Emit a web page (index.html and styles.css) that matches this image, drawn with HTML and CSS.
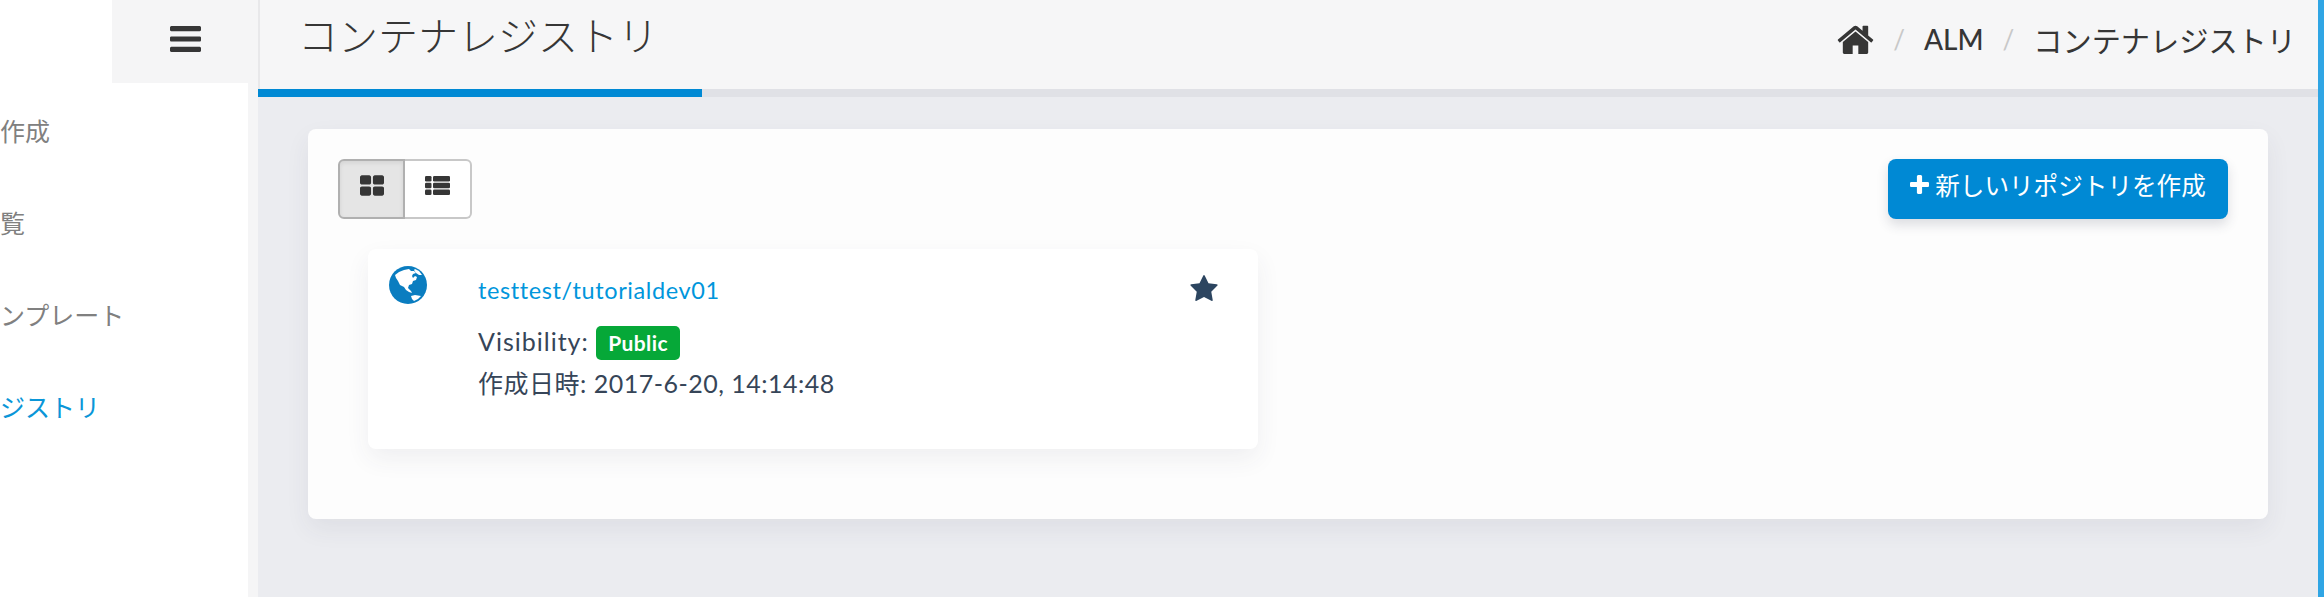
FILE: index.html
```html
<!DOCTYPE html>
<html lang="ja">
<head>
<meta charset="utf-8">
<title>コンテナレジストリ</title>
<link rel="stylesheet" href="styles.css">
</head>
<body>
<div class="app">
  <aside class="sidebar">
    <div class="brand-row">
      <div class="brand"></div>
      <div class="toggle">
        <svg class="icon-bars" viewBox="128 256 1536 1280"><path d="M1664 1344v128q0 26-19 45t-45 19H192q-26 0-45-19t-19-45v-128q0-26 19-45t45-19h1408q26 0 45 19t19 45zm0-512v128q0 26-19 45t-45 19H192q-26 0-45-19t-19-45V832q0-26 19-45t45-19h1408q26 0 45 19t19 45zm0-512v128q0 26-19 45t-45 19H192q-26 0-45-19t-19-45V320q0-26 19-45t45-19h1408q26 0 45 19t19 45z"/></svg>
      </div>
    </div>
    <div class="side-body">
      <nav class="menu">
        <a class="menu-item">作成</a>
        <a class="menu-item">覧</a>
        <a class="menu-item">ンプレート</a>
        <a class="menu-item active">ジストリ</a>
      </nav>
    </div>
  </aside>
  <main class="main">
    <header class="topbar">
      <h1 class="title">コンテナレジストリ</h1>
      <ol class="crumbs">
        <li class="crumb">
          <svg class="icon-home" viewBox="92 128 1608 1408"><path d="M1472 992v480q0 26-19 45t-45 19h-384v-384H768v384H384q-26 0-45-19t-19-45V992q0-1 .5-3t.5-3l575-474 575 474q1 2 1 6zm223-69l-62 74q-8 9-21 11h-3q-13 0-21-7L896 424l-692 577q-12 8-24 7-13-2-21-11l-62-74q-8-10-7-23.500t11-21.500l719-599q32-26 76-26t76 26l244 204V288q0-14 9-23t23-9h192q14 0 23 9t9 23v408l219 182q10 8 11 21.500t-7 23.500z"/></svg>
        </li>
        <li class="sep">/</li>
        <li class="crumb alm">ALM</li>
        <li class="sep">/</li>
        <li class="crumb">コンテナレジストリ</li>
      </ol>
    </header>
    <div class="progress"><div class="progress-fill"></div></div>
    <section class="panel">
      <div class="toolbar">
        <div class="btn-group">
          <button class="view-btn on">
            <svg class="icon-view" viewBox="64 128 1664 1408"><path d="M832 1024v384q0 52-38 90t-90 38H192q-52 0-90-38t-38-90v-384q0-52 38-90t90-38h512q52 0 90 38t38 90zm0-768v384q0 52-38 90t-90 38H192q-52 0-90-38t-38-90V256q0-52 38-90t90-38h512q52 0 90 38t38 90zm896 768v384q0 52-38 90t-90 38h-512q-52 0-90-38t-38-90v-384q0-52 38-90t90-38h512q52 0 90 38t38 90zm0-768v384q0 52-38 90t-90 38h-512q-52 0-90-38t-38-90V256q0-52 38-90t90-38h512q52 0 90 38t38 90z"/></svg>
          </button>
          <button class="view-btn">
            <svg class="icon-list" viewBox="0 0 25 19"><rect x="0" y="0" width="6.500" height="5.600" rx="1.300"/><rect x="8" y="0" width="17" height="5.600" rx="1.300"/><rect x="0" y="6.700" width="6.500" height="5.600" rx="1.300"/><rect x="8" y="6.700" width="17" height="5.600" rx="1.300"/><rect x="0" y="13.400" width="6.500" height="5.600" rx="1.300"/><rect x="8" y="13.400" width="17" height="5.600" rx="1.300"/></svg>
          </button>
        </div>
        <button class="btn-new">
          <svg class="icon-plus" viewBox="192 128 1408 1408"><path d="M1600 736v192q0 40-28 68t-68 28h-416v416q0 40-28 68t-68 28H800q-40 0-68-28t-28-68v-416H288q-40 0-68-28t-28-68V736q0-40 28-68t68-28h416V224q0-40 28-68t68-28h192q40 0 68 28t28 68v416h416q40 0 68 28t28 68z"/></svg>
          <span>新しいリポジトリを作成</span>
        </button>
      </div>
      <article class="card">
        <svg class="icon-globe" viewBox="0 0 38 38">
          <circle cx="19" cy="19" r="19" fill="#0a7dc0"/>
          <path fill="#fff" d="M6 9l4-3 5-2 5-1 2 2 3 0 2 2-3 1-1 2 1 2 2-2 2 1-1 3-3 1-1 3-3 1-1 3 3 3 1 2-3-1-3-2-2-3-4-2-2-4-2-3z"/>
          <path fill="#fff" d="M26 3l4 2 3 4-3 0-3-2-2-3z"/>
          <path fill="#fff" d="M22 30l4-1 6 1-3 3-4 2-2-2z"/>
        </svg>
        <div class="card-body">
          <a class="repo">testtest/tutorialdev01</a>
          <p class="line vis">Visibility: <span class="badge">Public</span></p>
          <p class="line date">作成日時: 2017-6-20, 14:14:48</p>
        </div>
        <svg class="icon-star" viewBox="63 32 1665 1587"><path d="M1728 647q0 22-26 48l-363 354 86 500q1 7 1 20 0 21-10.500 35.500T1385 1619q-19 0-40-12l-449-236-449 236q-22 12-40 12-21 0-31.500-14.500T365 1569q0-6 2-20l86-500L88 695q-25-27-25-48 0-37 56-46l502-73L846 73q19-41 49-41t50 41l225 455 502 73q56 9 56 46z"/></svg>
      </article>
    </section>
  </main>
  <div class="edge"></div>
</div>
</body>
</html>
```

FILE: styles.css
```css
* { box-sizing: border-box; }
html, body { margin: 0; height: 100%; overflow: hidden; }
body {
  font-family: "Lato", "Noto Sans CJK JP", sans-serif;
  background: #ebecf0;
  color: #363f4d;
}
.app { display: flex; height: 597px; }

.sidebar { width: 258px; flex: none; display: flex; flex-direction: column; }
.brand-row { display: flex; height: 83px; flex: none; }
.brand { width: 112px; background: #fff; }
.toggle {
  flex: 1;
  background: #f5f5f6;
  display: flex;
  align-items: center;
  justify-content: center;
  padding-bottom: 5px;
}
.icon-bars { width: 31px; height: 26px; fill: #363636; }
.side-body { flex: 1; background: #f5f5f6; padding-right: 10px; }
.menu { background: #fff; height: 100%; display: flex; flex-direction: column; padding-top: 25px; }
.menu-item { height: 92px; flex: none; font-size: 25px; line-height: 44px; color: #808080; font-family: "Noto Sans CJK JP", sans-serif; }
.menu-item.active { color: #0a96d8; }

.main { flex: 1; min-width: 0; display: flex; flex-direction: column; }
.topbar {
  height: 89px;
  flex: none;
  background: #f6f6f7;
  border-left: 2px solid #e8e8ea;
  display: flex;
  justify-content: space-between;
  align-items: flex-start;
  padding: 0 28px 0 38px;
}
.title {
  margin: 5px 0 0;
  font-size: 40px;
  line-height: 58px;
  font-weight: 300;
  color: #363636;
  font-family: "Noto Sans CJK JP", sans-serif;
}
.crumbs { list-style: none; display: flex; align-items: center; margin: 0; padding: 0; height: 77px; font-size: 29.200px; color: #363636; font-family: "Noto Sans CJK JP", sans-serif; }
.crumb { display: flex; align-items: center; }
.alm { font-family: "Lato", sans-serif; font-weight: 500; font-size: 28px; }
.sep { color: #c8c8c8; padding: 0 19px; font-family: "Lato", sans-serif; font-size: 26px; }
.icon-home { width: 37px; height: 31px; fill: #363636; }

.progress { height: 8px; flex: none; background: #e0e1e6; }
.progress-fill { width: 444px; height: 100%; background: #0089d4; }

.panel {
  margin: 32px 56px 0 50px;
  height: 390px;
  background: #fdfdfd;
  border-radius: 8px;
  box-shadow: 0 10px 24px rgba(50, 55, 80, 0.07);
  padding: 30px 40px 0 30px;
}
.toolbar { display: flex; justify-content: space-between; align-items: flex-start; }
.btn-group { display: flex; height: 60px; }
.view-btn {
  width: 67px;
  height: 60px;
  background: #fff;
  border: 2px solid #c8c8c8;
  border-left: 0;
  border-radius: 0 6px 6px 0;
  padding: 0 0 8px;
  display: flex;
  align-items: center;
  justify-content: center;
}
.view-btn.on {
  background: #e5e5e5;
  border: 2px solid #b0b0b0;
  border-radius: 6px 0 0 6px;
  box-shadow: inset 0 2px 4px rgba(0, 0, 0, 0.08);
}
.icon-view { width: 24px; height: 21px; fill: #363636; }
.icon-list { width: 25px; height: 19px; fill: #363636; }
.btn-new {
  width: 340px;
  height: 60px;
  background: #0089d4;
  border: 0;
  border-radius: 8px;
  color: #fff;
  font-size: 24.600px;
  font-family: "Noto Sans CJK JP", sans-serif;
  display: flex;
  align-items: center;
  justify-content: center;
  gap: 6px;
  padding: 0 0 10px;
  box-shadow: 0 6px 12px rgba(50, 55, 80, 0.16);
}
.icon-plus { width: 19px; height: 19px; fill: #fff; }

.card {
  margin: 30px 0 0 30px;
  width: 890px;
  height: 200px;
  background: #fff;
  border-radius: 8px;
  box-shadow: 0 10px 24px rgba(50, 55, 80, 0.07);
  display: flex;
  align-items: flex-start;
  padding: 17px 40px 0 21px;
}
.icon-globe { width: 38px; height: 38px; flex: none; }
.card-body { margin-left: 51px; flex: 1; color: #364558; font-size: 25px; }
.repo { display: block; color: #0096dc; font-size: 23.500px; line-height: 42px; letter-spacing: 0.6px; margin: 3px 0 9px; }
.line { margin: 0; line-height: 43px; height: 42px; font-size: 25px; }
.vis { letter-spacing: 1px; }
.date { letter-spacing: 0.5px; }
.badge {
  display: inline-block;
  background: #06a838;
  color: #fff;
  font-size: 21px;
  font-weight: 700;
  line-height: 34px;
  height: 34px;
  padding: 0 12px;
  border-radius: 5px;
  vertical-align: 0;
  letter-spacing: 0.4px;
}
.icon-star { width: 28px; height: 26px; flex: none; fill: #2c4560; margin-top: 9px; }

.edge { position: absolute; top: 0; right: 0; width: 6px; height: 597px; background: #2fa5e4; }
```
